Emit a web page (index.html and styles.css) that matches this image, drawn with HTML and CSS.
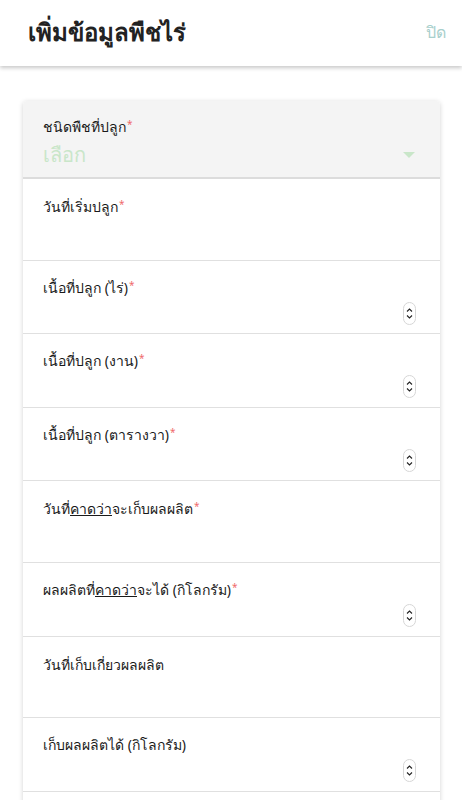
FILE: index.html
```html
<!DOCTYPE html>
<html lang="th">
<head>
<meta charset="utf-8">
<link rel="stylesheet" href="styles.css">
</head>
<body>
<header class="topbar">
  <h1 class="title">เพิ่มข้อมูลพืชไร่</h1>
  <span class="close">ปิด</span>
</header>
<main class="content">
  <section class="card">
    <div class="row select-row">
      <div class="label">ชนิดพืชที่ปลูก<span class="req">*</span></div>
      <div class="select-line">
        <span class="placeholder">เลือก</span>
        <svg class="caret" width="12" height="6" viewBox="0 0 12 6"><path d="M0 0h12L6 6z" fill="#c9e6c9"/></svg>
      </div>
    </div>
    <div class="row date-row">
      <div class="label">วันที่เริ่มปลูก<span class="req">*</span></div>
    </div>
    <div class="row num-row">
      <div class="label">เนื้อที่ปลูก (ไร่)<span class="req">*</span></div>
      <div class="spin-line"><svg class="spin" width="13" height="23" viewBox="0 0 13 23"><rect x="0.5" y="0.5" width="12" height="22" rx="6" fill="#fff" stroke="#d6d6d6"/><path d="M4 9.5l2.5-2.5 2.5 2.5M4 13.5l2.5 2.5 2.5-2.5" fill="none" stroke="#222" stroke-width="1.1"/></svg></div>
    </div>
    <div class="row num-row">
      <div class="label">เนื้อที่ปลูก (งาน)<span class="req">*</span></div>
      <div class="spin-line"><svg class="spin" width="13" height="23" viewBox="0 0 13 23"><rect x="0.5" y="0.5" width="12" height="22" rx="6" fill="#fff" stroke="#d6d6d6"/><path d="M4 9.5l2.5-2.5 2.5 2.5M4 13.5l2.5 2.5 2.5-2.5" fill="none" stroke="#222" stroke-width="1.1"/></svg></div>
    </div>
    <div class="row num-row">
      <div class="label">เนื้อที่ปลูก (ตารางวา)<span class="req">*</span></div>
      <div class="spin-line"><svg class="spin" width="13" height="23" viewBox="0 0 13 23"><rect x="0.5" y="0.5" width="12" height="22" rx="6" fill="#fff" stroke="#d6d6d6"/><path d="M4 9.5l2.5-2.5 2.5 2.5M4 13.5l2.5 2.5 2.5-2.5" fill="none" stroke="#222" stroke-width="1.1"/></svg></div>
    </div>
    <div class="row date-row">
      <div class="label">วันที่<u>คาดว่า</u>จะเก็บผลผลิต<span class="req">*</span></div>
    </div>
    <div class="row num-row">
      <div class="label">ผลผลิตที่<u>คาดว่า</u>จะได้ (กิโลกรัม)<span class="req">*</span></div>
      <div class="spin-line"><svg class="spin" width="13" height="23" viewBox="0 0 13 23"><rect x="0.5" y="0.5" width="12" height="22" rx="6" fill="#fff" stroke="#d6d6d6"/><path d="M4 9.5l2.5-2.5 2.5 2.5M4 13.5l2.5 2.5 2.5-2.5" fill="none" stroke="#222" stroke-width="1.1"/></svg></div>
    </div>
    <div class="row date-row">
      <div class="label">วันที่เก็บเกี่ยวผลผลิต</div>
    </div>
    <div class="row num-row">
      <div class="label">เก็บผลผลิตได้ (กิโลกรัม)</div>
      <div class="spin-line"><svg class="spin" width="13" height="23" viewBox="0 0 13 23"><rect x="0.5" y="0.5" width="12" height="22" rx="6" fill="#fff" stroke="#d6d6d6"/><path d="M4 9.5l2.5-2.5 2.5 2.5M4 13.5l2.5 2.5 2.5-2.5" fill="none" stroke="#222" stroke-width="1.1"/></svg></div>
    </div>
    <div class="row date-row"></div>
  </section>
</main>
</body>
</html>
```
FILE: styles.css
```css
* { box-sizing: border-box; }
html, body { margin: 0; padding: 0; background: #fff; }
body {
  font-family: "Noto Sans", "DejaVu Sans", sans-serif;
  color: #222;
  width: 462px;
  height: 800px;
  overflow: hidden;
}
.topbar {
  height: 66px;
  display: flex;
  align-items: center;
  justify-content: space-between;
  padding: 0 16px 0 28px;
  background: #fff;
  box-shadow: 0 2px 4px rgba(0,0,0,0.22);
  position: relative;
  z-index: 1;
}
.title {
  margin: 0;
  font-size: 24px;
  font-weight: 700;
  color: #222;
  line-height: 1;
  padding-bottom: 2px;
}
.close {
  font-size: 16px;
  color: #a8cfcc;
  padding-bottom: 2px;
}
.content {
  padding: 35px 22px 0 23px;
}
.card {
  background: #fff;
  border-radius: 4px 4px 0 0;
  box-shadow: 0 1px 5px rgba(0,0,0,0.18);
}
.row {
  border-bottom: 1px solid #e0e0e0;
  padding: 0 24px 0 20px;
}
.label {
  font-size: 14px;
  line-height: 20px;
  color: #1a1a1a;
}
.req {
  color: #ef6b6b;
  font-size: 10px;
  vertical-align: top;
  line-height: 14px;
  margin-left: 1px;
}
.select-row {
  background: #f4f4f4;
  height: 78px;
  padding-top: 16px;
  border-bottom: 2px solid #dcdcdc;
  border-radius: 4px 4px 0 0;
}
.select-line {
  display: flex;
  align-items: center;
  justify-content: space-between;
  padding-right: 1px;
  margin-top: 6px;
}
.placeholder {
  font-size: 20px;
  line-height: 24px;
  color: #c9e6c9;
}
.date-row {
  height: 81.75px;
  padding-top: 18px;
}
.num-row {
  height: 73.5px;
  padding-top: 17px;
}
.spin-line {
  display: flex;
  justify-content: flex-end;
  margin-top: 4px;
}
.spin { display: block; }
```
